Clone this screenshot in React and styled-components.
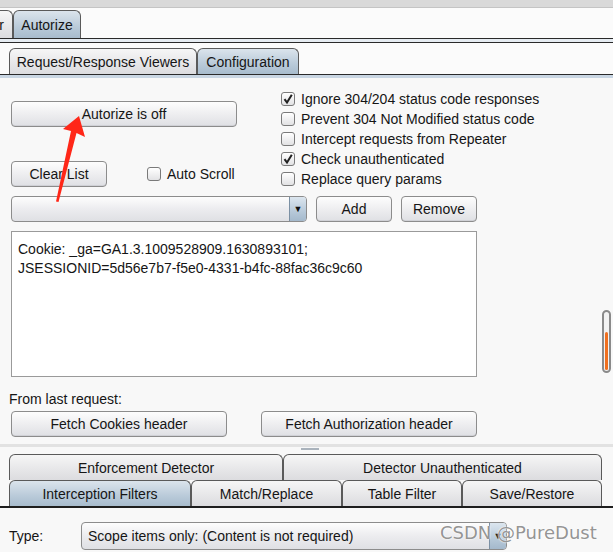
import React from "react";
import styled, { createGlobalStyle } from "styled-components";

const Global = createGlobalStyle`
  html, body { margin: 0; padding: 0; background: #f8f8f8; }
  * { box-sizing: border-box; }
`;

const Page = styled.div`
  position: relative;
  width: 613px;
  height: 552px;
  overflow: hidden;
  background: #f8f8f8;
  font-family: "Liberation Sans", Arial, sans-serif;
  font-size: 14px;
  color: #151515;
`;

const TopStrip = styled.div`
  height: 8px;
  background: #d9d9d9;
  border-bottom: 1px solid #c4c4c4;
`;

const TabBar = styled.div`
  display: flex;
  align-items: flex-end;
  height: ${(p) => p.$h}px;
  padding-left: ${(p) => p.$pl || 0}px;
  background: #fbfbfb;
  border-bottom: 1px solid #2a2a2a;
`;

const Tab = styled.div`
  flex: none;
  display: flex;
  align-items: center;
  justify-content: center;
  width: ${(p) => p.$w}px;
  height: ${(p) => p.$h || 26}px;
  margin-left: ${(p) => p.$ml || 0}px;
  border: 1px solid #5a5a5a;
  border-bottom: none;
  border-radius: 6px 6px 0 0;
  white-space: nowrap;
  background: ${(p) =>
    p.$active
      ? "linear-gradient(#dbe4ec, #b9cad9 60%, #a8bccd)"
      : "linear-gradient(#f6f6f6, #e6e6e8 60%, #dcdcdf)"};
`;

const Strip = styled.div`
  height: ${(p) => p.$h}px;
  background: ${(p) => p.$bg};
  border-bottom: ${(p) => (p.$line ? "1px solid #2a2a2a" : "none")};
`;

const ConfigPanel = styled.div`
  height: 366px;
  padding: 11px 0 0 11px;
  display: flex;
  flex-direction: column;
`;

const TopRow = styled.div`
  display: flex;
  height: 100px;
`;

const LeftCol = styled.div`
  width: 270px;
  padding-top: 12px;
  display: flex;
  flex-direction: column;
  gap: 34px;
`;

const Inline = styled.div`
  display: flex;
  align-items: center;
  gap: ${(p) => p.$gap || 0}px;
  margin-top: ${(p) => p.$mt || 0}px;
`;

const Button = styled.div`
  flex: none;
  display: flex;
  align-items: center;
  justify-content: center;
  width: ${(p) => p.$w}px;
  height: 26px;
  border: 1px solid #8c8c8c;
  border-radius: 4px;
  background: linear-gradient(#fdfdfd, #eeeef0 50%, #dfe0e4);
  box-shadow: inset 0 -1px 0 #d0d1d6;
  white-space: nowrap;
`;

const CheckList = styled.div`
  display: flex;
  flex-direction: column;
`;

const CheckRow = styled.label`
  display: flex;
  align-items: center;
  height: 20px;
  gap: 6px;
  white-space: nowrap;
`;

const Box = styled.span`
  flex: none;
  width: 14px;
  height: 14px;
  border: 1px solid #7a7a7a;
  border-radius: 3px;
  background: linear-gradient(#ffffff, #e2e2e4);
  display: flex;
  align-items: center;
  justify-content: center;
`;

const Check = ({ checked, label }) => (
  <CheckRow>
    <Box>
      {checked && (
        <svg width="12" height="12" viewBox="0 0 12 12">
          <path d="M2.5 6.2 L5 9.5 L9.8 1.8" fill="none" stroke="#222" strokeWidth="2" />
        </svg>
      )}
    </Box>
    {label}
  </CheckRow>
);

const Combo = styled.div`
  flex: none;
  display: flex;
  width: ${(p) => p.$w}px;
  height: ${(p) => p.$h || 26}px;
  border: 1px solid #8c8c8c;
  border-radius: 4px;
  overflow: hidden;
  background: linear-gradient(#fdfdfd, #ececef 50%, #dfe0e4);
`;

const ComboText = styled.div`
  flex: 1;
  display: flex;
  align-items: center;
  padding-left: 6px;
  white-space: nowrap;
`;

const ComboArrow = styled.div`
  flex: none;
  width: 17px;
  display: flex;
  align-items: center;
  justify-content: center;
  border-left: 1px solid #7b90a4;
  background: linear-gradient(#dce6ef, #b7c9d9 60%, #a4b9cc);
  font-size: 9px;
  color: #111;
`;

const TextArea = styled.div`
  margin-top: 9px;
  width: 466px;
  height: 146px;
  background: #fff;
  border: 1px solid #9a9a9a;
  padding: 8px 6px;
  line-height: 19px;
  white-space: nowrap;
`;

const Label = styled.div`
  flex: none;
  width: ${(p) => (p.$w ? `${p.$w}px` : "auto")};
  margin: ${(p) => p.$m || 0};
  line-height: 16px;
  white-space: nowrap;
`;

const Scroll = styled.div`
  position: absolute;
  left: 602px;
  top: 310px;
  width: 9px;
  height: 63px;
  border: 2px solid #8a8a8a;
  border-radius: 5px;
  background: #f2f2f2;
`;

const ScrollFill = styled.div`
  position: absolute;
  left: 1px;
  right: 1px;
  bottom: 1px;
  height: 38px;
  border-radius: 2px;
  background: #f07020;
`;

const Divider = styled.div`
  height: 10px;
  border-top: 3px solid #e2e2e2;
  display: flex;
  justify-content: center;
  padding-left: 6px;
`;

const Grip = styled.div`
  width: 18px;
  height: 2px;
  margin-top: 1px;
  background: #aab3bc;
`;

const BottomTabs = styled.div`
  padding-left: 9px;
  border-bottom: 2px solid #1e1e1e;
`;

const TabRow = styled.div`
  display: flex;
`;

const TypeRow = styled.div`
  display: flex;
  align-items: center;
  height: 44px;
  padding: 12px 0 0 9px;
`;

const Watermark = styled.div`
  position: absolute;
  left: 440px;
  top: 522px;
  font-family: "DejaVu Sans", sans-serif;
  font-size: 18px;
  color: rgba(120, 120, 120, 0.8);
  text-shadow: 0 0 2px #fff, 0 0 1px #fff;
  white-space: nowrap;
`;

const Arrow = styled.svg`
  position: absolute;
  left: 0;
  top: 0;
  pointer-events: none;
`;

export default function App() {
  return (
    <Page>
      <Global />
      <TopStrip />
      <TabBar $h={31}>
        <Tab $w={23} $h={28} $ml={-10}>r</Tab>
        <Tab $w={68} $h={28} $active>Autorize</Tab>
      </TabBar>
      <Strip $h={4} $bg="#e6ecf2" $line />
      <TabBar $h={32} $pl={9}>
        <Tab $w={188}>Request/Response Viewers</Tab>
        <Tab $w={102} $active>Configuration</Tab>
      </TabBar>
      <Strip $h={3} $bg="#c9d6e3" />
      <ConfigPanel>
        <TopRow>
          <LeftCol>
            <Button $w={226}>Autorize is off</Button>
            <Inline $gap={40}>
              <Button $w={96}>Clear List</Button>
              <Check label="Auto Scroll" />
            </Inline>
          </LeftCol>
          <CheckList>
            <Check checked label="Ignore 304/204 status code responses" />
            <Check label="Prevent 304 Not Modified status code" />
            <Check label="Intercept requests from Repeater" />
            <Check checked label="Check unauthenticated" />
            <Check label="Replace query params" />
          </CheckList>
        </TopRow>
        <Inline $gap={9} $mt={7}>
          <Combo $w={296}>
            <ComboText />
            <ComboArrow>▼</ComboArrow>
          </Combo>
          <Button $w={76}>Add</Button>
          <Button $w={76}>Remove</Button>
        </Inline>
        <TextArea>
          Cookie: _ga=GA1.3.1009528909.1630893101;
          <br />
          JSESSIONID=5d56e7b7-f5e0-4331-b4fc-88fac36c9c60
        </TextArea>
        <Label $m="14px 0 0 -2px">From last request:</Label>
        <Inline $gap={34} $mt={4}>
          <Button $w={216}>Fetch Cookies header</Button>
          <Button $w={216}>Fetch Authorization header</Button>
        </Inline>
      </ConfigPanel>
      <Divider>
        <Grip />
      </Divider>
      <BottomTabs>
        <TabRow>
          <Tab $w={274}>Enforcement Detector</Tab>
          <Tab $w={319}>Detector Unauthenticated</Tab>
        </TabRow>
        <TabRow>
          <Tab $w={182} $active>Interception Filters</Tab>
          <Tab $w={151}>Match/Replace</Tab>
          <Tab $w={120}>Table Filter</Tab>
          <Tab $w={140}>Save/Restore</Tab>
        </TabRow>
      </BottomTabs>
      <TypeRow>
        <Label $w={72}>Type:</Label>
        <Combo $w={426} $h={28}>
          <ComboText>Scope items only: (Content is not required)</ComboText>
          <ComboArrow>▼</ComboArrow>
        </Combo>
      </TypeRow>
      <Scroll>
        <ScrollFill />
      </Scroll>
      <Watermark>CSDN @PureDust</Watermark>
      <Arrow width="613" height="552" viewBox="0 0 613 552">
        <polygon
          points="79,116 85,137 76.5,133 58.5,202 56,201.5 71,131 63,129"
          fill="#ff2718"
        />
      </Arrow>
    </Page>
  );
}
